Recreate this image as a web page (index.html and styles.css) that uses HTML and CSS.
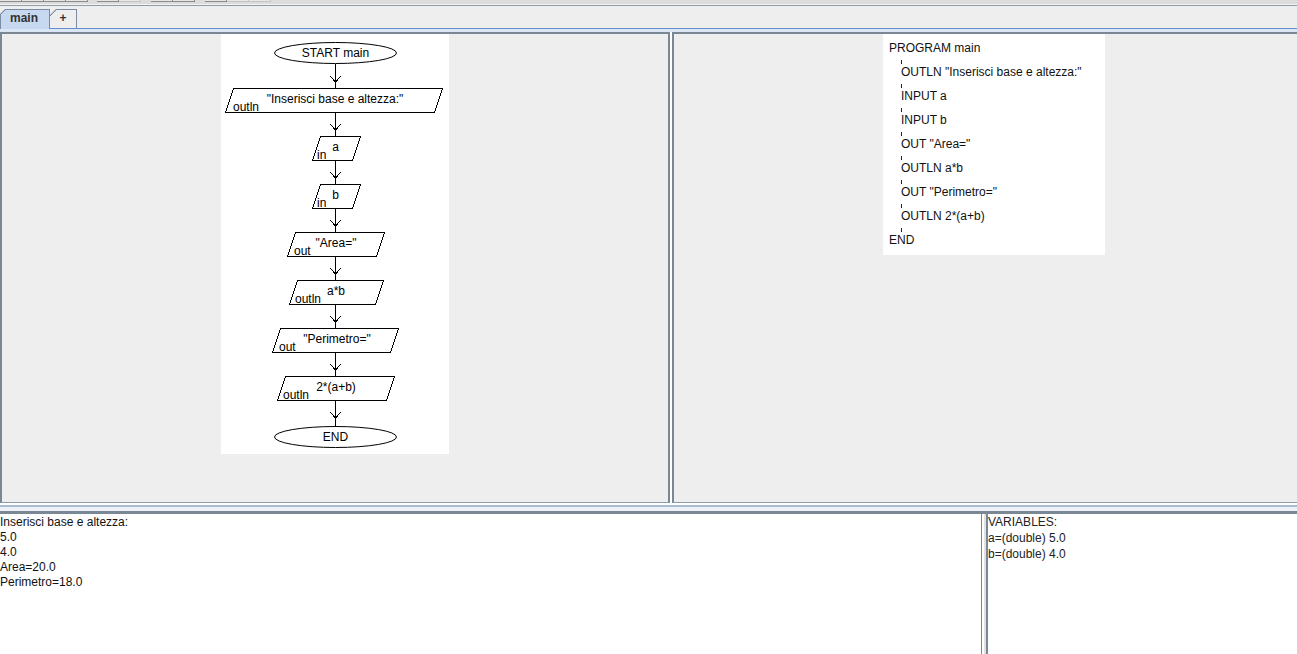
FILE: index.html
```html
<!DOCTYPE html>
<html>
<head>
<meta charset="utf-8">
<title>Flowchart</title>
<link rel="stylesheet" href="styles.css">
</head>
<body>
<div class="toolbar">
  <div class="tgroup g1"><span class="tbtn"></span><span class="tbtn"></span><span class="tbtn"></span><span class="tbtn"></span></div>
  <div class="tgroup g2"><span class="tbtn"></span><span class="tbtn off"></span></div>
  <div class="tgroup g3"><span class="tbtn"></span><span class="tbtn"></span></div>
  <div class="tgroup g4"><span class="tbtn"></span><span class="tbtn off"></span><span class="tbtn off"></span></div>
</div>
<div class="tabstrip">
  <div class="tab tab-selected">main</div>
  <div class="tab tab-add">+</div>
</div>
<div class="band"></div>
<div class="top">
  <div class="panel panel-left">
    <svg class="flow" width="228" height="420" viewBox="0 0 228 420">
      <g class="shapes">
        <ellipse cx="114.5" cy="19" rx="61" ry="10.5"/>
        <line x1="114.5" y1="29.5" x2="114.5" y2="54"/>
        <polyline points="109,42 114.5,48 120,42"/>
        <polygon points="12.5,54.5 221.5,54.5 213.5,78.5 4.5,78.5"/>
        <line x1="114.5" y1="78.5" x2="114.5" y2="102"/>
        <polyline points="109,90 114.5,96 120,90"/>
        <polygon points="99.5,102.5 139.5,102.5 131.5,126.5 91.5,126.5"/>
        <line x1="114.5" y1="126.5" x2="114.5" y2="150"/>
        <polyline points="109,138 114.5,144 120,138"/>
        <polygon points="99.5,150.5 139.5,150.5 131.5,174.5 91.5,174.5"/>
        <line x1="114.5" y1="174.5" x2="114.5" y2="198"/>
        <polyline points="109,186 114.5,192 120,186"/>
        <polygon points="74.5,198.5 163.5,198.5 155.5,222.5 66.5,222.5"/>
        <line x1="114.5" y1="222.5" x2="114.5" y2="246"/>
        <polyline points="109,234 114.5,240 120,234"/>
        <polygon points="76.5,246.5 162.5,246.5 154.5,270.5 68.5,270.5"/>
        <line x1="114.5" y1="270.5" x2="114.5" y2="294"/>
        <polyline points="109,282 114.5,288 120,282"/>
        <polygon points="59.5,294.5 177.5,294.5 169.5,318.5 51.5,318.5"/>
        <line x1="114.5" y1="318.5" x2="114.5" y2="342"/>
        <polyline points="109,330 114.5,336 120,330"/>
        <polygon points="64.5,342.5 173.5,342.5 165.5,366.5 56.5,366.5"/>
        <line x1="114.5" y1="366.5" x2="114.5" y2="392.5"/>
        <polyline points="109,378 114.5,384 120,378"/>
        <ellipse cx="114.5" cy="403" rx="61" ry="10.5"/>
      </g>
      <g class="texts">
        <text class="mid" x="114.5" y="23">START main</text>
        <text x="12" y="77">outln</text>
        <text class="mid" x="114" y="68.5">"Inserisci base e altezza:"</text>
        <text x="96" y="125">in</text>
        <text class="mid" x="114.5" y="116.5">a</text>
        <text x="96" y="173">in</text>
        <text class="mid" x="114.5" y="164.5">b</text>
        <text x="73" y="221">out</text>
        <text class="mid" x="115" y="212.5">"Area="</text>
        <text x="74" y="269">outln</text>
        <text class="mid" x="115" y="260.5">a*b</text>
        <text x="58" y="317">out</text>
        <text class="mid" x="116" y="308.5">"Perimetro="</text>
        <text x="62" y="365">outln</text>
        <text class="mid" x="115" y="356.5">2*(a+b)</text>
        <text class="mid" x="114.5" y="407">END</text>
      </g>
    </svg>
  </div>
  <div class="panel panel-right">
    <div class="code">
      <div class="stmt">PROGRAM main</div>
      <div class="link"><span class="tick"></span></div>
      <div class="stmt indent">OUTLN "Inserisci base e altezza:"</div>
      <div class="link"><span class="tick"></span></div>
      <div class="stmt indent">INPUT a</div>
      <div class="link"><span class="tick"></span></div>
      <div class="stmt indent">INPUT b</div>
      <div class="link"><span class="tick"></span></div>
      <div class="stmt indent">OUT "Area="</div>
      <div class="link"><span class="tick"></span></div>
      <div class="stmt indent">OUTLN a*b</div>
      <div class="link"><span class="tick"></span></div>
      <div class="stmt indent">OUT "Perimetro="</div>
      <div class="link"><span class="tick"></span></div>
      <div class="stmt indent">OUTLN 2*(a+b)</div>
      <div class="link"><span class="tick"></span></div>
      <div class="stmt">END</div>
    </div>
  </div>
</div>
<div class="divider"></div>
<div class="bottom">
  <div class="output">
    <div class="line">Inserisci base e altezza:</div>
    <div class="line">5.0</div>
    <div class="line">4.0</div>
    <div class="line">Area=20.0</div>
    <div class="line">Perimetro=18.0</div>
  </div>
  <div class="vsplit"></div>
  <div class="vars">
    <div class="line">VARIABLES:</div>
    <div class="line">a=(double) 5.0</div>
    <div class="line">b=(double) 4.0</div>
  </div>
</div>
</body>
</html>
```

FILE: styles.css
```css
* { box-sizing: border-box; }
html, body { margin: 0; padding: 0; }
body {
  width: 1297px;
  height: 654px;
  overflow: hidden;
  background: #eeeeee;
  font-family: "Liberation Sans", Arial, sans-serif;
  font-size: 12px;
  color: #111;
}

/* toolbar remnant */
.toolbar {
  height: 6px;
  display: flex;
  align-items: flex-start;
  background: linear-gradient(#dcdcdc 0 4px, #f4f4f4 4px 5px, #8e9aa6 5px 6px);
}
.tgroup { display: flex; }
.g2 { margin-left: 9px; }
.g3 { margin-left: 10px; }
.g4 { margin-left: 10px; }
.tbtn {
  width: 22px;
  height: 2px;
  background: #e6e6e6;
  border-right: 1px solid #8a8a8a;
  border-bottom: 1px solid #8a8a8a;
}
.tbtn.off { border-color: #c4c4c4; }

/* tabs */
.tabstrip {
  height: 23px;
  display: flex;
  align-items: flex-end;
  border-bottom: 1px solid #6a8dcf;
}
.tab {
  font-weight: bold;
  color: #333;
  line-height: 17px;
  border-top: 1px solid #7b8ba1;
  border-right: 1px solid #7b8ba1;
}
.tab-selected {
  width: 50px;
  height: 20px;
  margin-bottom: -1px;
  padding-left: 9px;
  border-left: 1px solid #7b8ba1;
  background: linear-gradient(135deg, #7b8ba1 0 4.6px, #c6d9f0 4.6px);
  background-origin: border-box;
  clip-path: polygon(5px 0, 100% 0, 100% 100%, 0 100%, 0 5px);
}
.tab-add {
  width: 27px;
  height: 19px;
  text-align: center;
  background: linear-gradient(135deg, #7b8ba1 0 5.3px, #eeeeee 5.3px);
  background-origin: border-box;
  clip-path: polygon(6px 0, 100% 0, 100% 100%, 0 100%, 0 6px);
}
.band { height: 3px; background: #dbe6f4; }

/* top split */
.top {
  height: 471px;
  display: flex;
  gap: 2px;
  background: #ffffff;
}
.panel {
  border: 2px solid #7a8794;
  border-bottom: 1px solid #8e9bab;
  background: #eeeeee;
}
.panel-left {
  width: 670px;
  display: flex;
  justify-content: center;
  align-items: flex-start;
}
.panel-right {
  flex: 1;
  border-right: none;
}
.flow { display: block; background: #ffffff; }
.shapes { fill: none; stroke: #000; stroke-width: 1; shape-rendering: crispEdges; }
.shapes ellipse { shape-rendering: auto; }
.texts { font-family: "Liberation Sans", Arial, sans-serif; font-size: 12px; fill: #000; }
.texts .mid { text-anchor: middle; }

.code {
  margin-left: 209px;
  width: 222px;
  background: #ffffff;
  padding: 7px 0 8px 6px;
  color: #111;
}
.stmt { height: 14px; line-height: 14px; white-space: pre; }
.indent { padding-left: 12px; }
.link { height: 10px; padding-top: 5px; padding-left: 12px; }
.tick { display: block; width: 1px; height: 4px; background: #222; }

/* divider */
.divider {
  height: 8px;
  background: linear-gradient(#ffffff 0 2px, #a9bbd4 2px 4px, #eef1f5 4px 8px);
}

/* bottom split */
.bottom {
  height: 143px;
  display: flex;
  border-top: 3px solid #7a8794;
  background: #ffffff;
}
.output {
  width: 982px;
  padding-top: 1px;
  border-right: 1px solid #7a8794;
  color: #111;
}
.output .line { height: 15px; line-height: 15px; white-space: nowrap; }
.vsplit {
  width: 4px;
  background: linear-gradient(to right, #ffffff 0 2px, #e2e2e2 2px 4px);
}
.vars {
  flex: 1;
  border-left: 2px solid #7a8794;
  color: #222;
}
.vars .line { height: 16px; line-height: 16px; white-space: nowrap; }
```
